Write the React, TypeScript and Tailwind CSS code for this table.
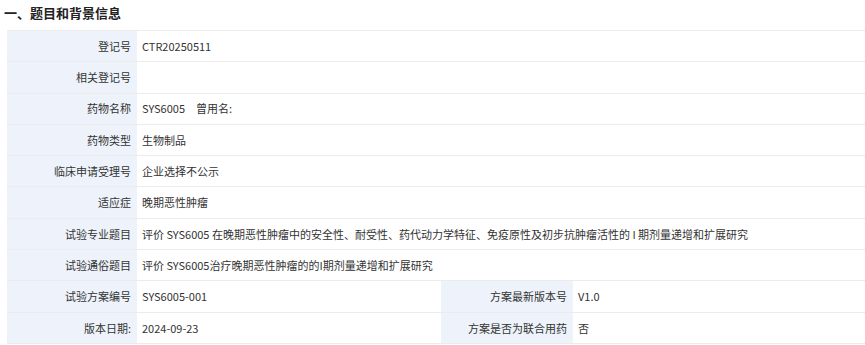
import React from "react";

const font = { fontFamily: '"Noto Sans CJK SC", "Microsoft YaHei", sans-serif' };

function Label({ children, w = "w-[130px]" }: { children?: React.ReactNode; w?: string }) {
  return (
    <div className={`${w} shrink-0 bg-[#eef3fb] flex items-center justify-end pr-[6px] text-[11px] text-[#333]`}>
      {children}
    </div>
  );
}

function Value({ children, className = "flex-1" }: { children?: React.ReactNode; className?: string }) {
  return <div className={`${className} bg-white flex items-center pl-[5px] text-[11px] text-[#333] whitespace-nowrap`}>{children}</div>;
}

const rows: [string, React.ReactNode][] = [
  ["登记号", "CTR20250511"],
  ["相关登记号", ""],
  [
    "药物名称",
    <span>
      SYS6005<span className="ml-[11px]">曾用名:</span>
    </span>,
  ],
  ["药物类型", "生物制品"],
  ["临床申请受理号", "企业选择不公示"],
  ["适应症", "晚期恶性肿瘤"],
  ["试验专业题目", "评价 SYS6005 在晚期恶性肿瘤中的安全性、耐受性、药代动力学特征、免疫原性及初步抗肿瘤活性的 I 期剂量递增和扩展研究"],
  ["试验通俗题目", "评价 SYS6005治疗晚期恶性肿瘤的的I期剂量递增和扩展研究"],
];

const split: [string, string, string, string][] = [
  ["试验方案编号", "SYS6005-001", "方案最新版本号", "V1.0"],
  ["版本日期:", "2024-09-23", "方案是否为联合用药", "否"],
];

export default function App() {
  return (
    <div className="w-[865px] h-[345px] bg-white overflow-hidden" style={font}>
      <div className="h-[30px] flex items-center pb-[5px] pl-[4px] text-[13px] font-bold text-[#222]">一、题目和背景信息</div>
      <div className="ml-[7px] border-t border-[#ececec]">
        {rows.map(([l, v], i) => (
          <div key={i} className="flex h-[31.3px] border-b border-[#ececec]">
            <Label>{l}</Label>
            <Value>{v}</Value>
          </div>
        ))}
        {split.map(([l1, v1, l2, v2], i) => (
          <div key={"s" + i} className="flex h-[31.3px] border-b border-[#ececec]">
            <Label>{l1}</Label>
            <Value className="w-[304px] shrink-0">{v1}</Value>
            <Label w="w-[132px]">{l2}</Label>
            <Value>{v2}</Value>
          </div>
        ))}
      </div>
    </div>
  );
}
